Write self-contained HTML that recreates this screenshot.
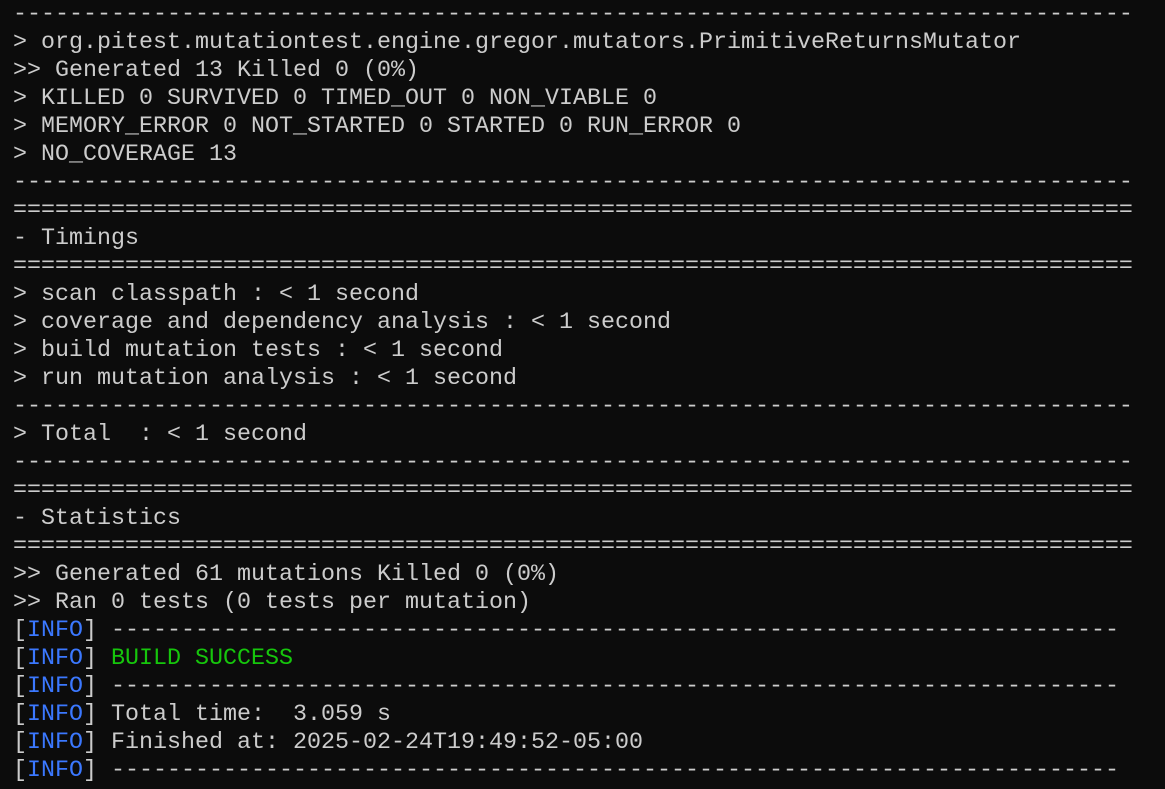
<!DOCTYPE html>
<html><head><meta charset="utf-8"><style>
html,body{margin:0;padding:0;background:#0c0c0c;width:1165px;height:789px;overflow:hidden}
pre{margin:0;padding:1px 0 0 13px;font-family:"Liberation Mono","DejaVu Sans Mono",monospace;font-size:23.33px;line-height:28px;color:#cccccc;white-space:pre}
.b{color:#3b78ff}.g{color:#16c60c}
</style></head><body><pre>--------------------------------------------------------------------------------
&gt; org.pitest.mutationtest.engine.gregor.mutators.PrimitiveReturnsMutator
&gt;&gt; Generated 13 Killed 0 (0%)
&gt; KILLED 0 SURVIVED 0 TIMED_OUT 0 NON_VIABLE 0
&gt; MEMORY_ERROR 0 NOT_STARTED 0 STARTED 0 RUN_ERROR 0
&gt; NO_COVERAGE 13
--------------------------------------------------------------------------------
================================================================================
- Timings
================================================================================
&gt; scan classpath : &lt; 1 second
&gt; coverage and dependency analysis : &lt; 1 second
&gt; build mutation tests : &lt; 1 second
&gt; run mutation analysis : &lt; 1 second
--------------------------------------------------------------------------------
&gt; Total  : &lt; 1 second
--------------------------------------------------------------------------------
================================================================================
- Statistics
================================================================================
&gt;&gt; Generated 61 mutations Killed 0 (0%)
&gt;&gt; Ran 0 tests (0 tests per mutation)
[<span class="b">INFO</span>] ------------------------------------------------------------------------
[<span class="b">INFO</span>] <span class="g">BUILD SUCCESS</span>
[<span class="b">INFO</span>] ------------------------------------------------------------------------
[<span class="b">INFO</span>] Total time:  3.059 s
[<span class="b">INFO</span>] Finished at: 2025-02-24T19:49:52-05:00
[<span class="b">INFO</span>] ------------------------------------------------------------------------
</pre></body></html>
